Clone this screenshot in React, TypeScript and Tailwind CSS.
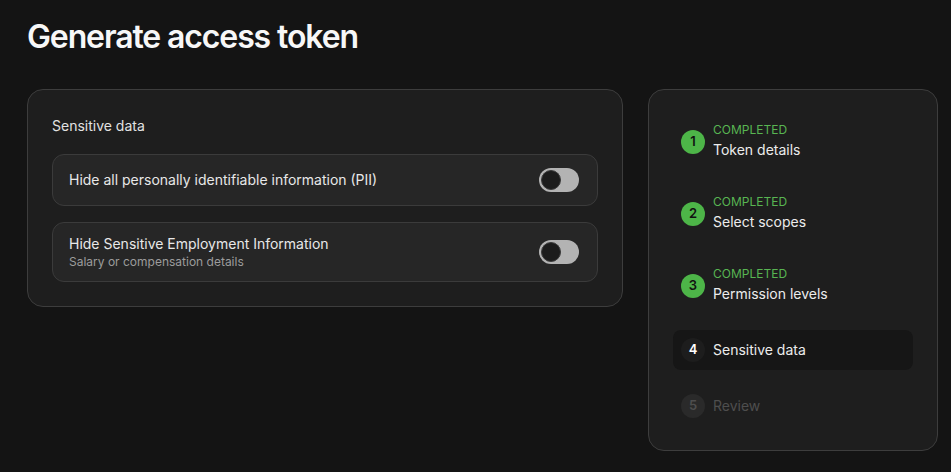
import { useState } from 'react';

type StepState = 'done' | 'current' | 'todo';

const steps: { n: number; title: string; state: StepState }[] = [
  { n: 1, title: 'Token details', state: 'done' },
  { n: 2, title: 'Select scopes', state: 'done' },
  { n: 3, title: 'Permission levels', state: 'done' },
  { n: 4, title: 'Sensitive data', state: 'current' },
  { n: 5, title: 'Review', state: 'todo' },
];

function Toggle({ on, onChange }: { on: boolean; onChange: (v: boolean) => void }) {
  return (
    <button
      type="button"
      role="switch"
      aria-checked={on}
      onClick={() => onChange(!on)}
      className="relative flex h-6 w-10 shrink-0 items-center rounded-full bg-[#b3b3b3] p-[2px]"
    >
      <span
        className={
          'block h-5 w-5 rounded-full border border-[#3a3a3a] bg-[#1c1c1c] transition-transform ' +
          (on ? 'translate-x-4' : 'translate-x-0')
        }
      />
    </button>
  );
}

function SettingRow({ title, hint }: { title: string; hint?: string }) {
  const [on, setOn] = useState(false);
  return (
    <div
      className={
        'flex items-center justify-between rounded-xl border border-[#3b3b3b] bg-[#262626] pl-4 pr-[18px] ' +
        (hint ? 'h-[60px]' : 'h-[52px]')
      }
    >
      <div className="flex flex-col">
        <span className="text-sm leading-5 text-[#e8e8e8]">{title}</span>
        {hint && <span className="text-xs leading-4 text-[#9c9c9c]">{hint}</span>}
      </div>
      <Toggle on={on} onChange={setOn} />
    </div>
  );
}

function Step({ n, title, state }: { n: number; title: string; state: StepState }) {
  if (state === 'done') {
    return (
      <div className="flex items-center gap-2 p-2">
        <span className="grid h-6 w-6 place-items-center rounded-full bg-[#4db548] text-[13px] font-semibold text-[#111]">
          {n}
        </span>
        <div className="flex flex-col">
          <span className="text-xs leading-4 text-[#58b552]">COMPLETED</span>
          <span className="text-sm leading-6 text-[#ececec]">{title}</span>
        </div>
      </div>
    );
  }
  if (state === 'current') {
    return (
      <div className="flex h-10 items-center gap-2 rounded-lg bg-[#161616] px-2">
        <span className="grid h-6 w-6 place-items-center rounded-full bg-[#1d1d1d] text-[13px] font-semibold text-white">
          {n}
        </span>
        <span className="text-sm text-[#ececec]">{title}</span>
      </div>
    );
  }
  return (
    <div className="flex h-10 items-center gap-2 px-2">
      <span className="grid h-6 w-6 place-items-center rounded-full bg-[#2a2a2a] text-[13px] font-semibold text-[#4e4e4e]">
        {n}
      </span>
      <span className="text-sm text-[#4e4e4e]">{title}</span>
    </div>
  );
}

export default function App() {
  return (
    <div
      className="min-h-screen overflow-hidden bg-[#141414] pl-[27px] pt-[17px]"
      style={{ fontFamily: 'Inter, "Noto Sans", sans-serif' }}
    >
      <h1 className="text-[32px] font-semibold leading-10 tracking-[-0.035em] text-[#f7f7f7]">
        Generate access token
      </h1>

      <div className="mt-8 flex items-start gap-[25px]">
        <section className="w-[596px] shrink-0 rounded-2xl border border-[#3d3d3d] bg-[#1e1e1e] p-6">
          <h2 className="text-sm leading-6 text-[#e2e2e2]">Sensitive data</h2>
          <div className="mt-4 flex flex-col gap-4">
            <SettingRow title="Hide all personally identifiable information (PII)" />
            <SettingRow title="Hide Sensitive Employment Information" hint="Salary or compensation details" />
          </div>
        </section>

        <aside className="w-[290px] shrink-0 rounded-2xl border border-[#3d3d3d] bg-[#1e1e1e] p-6">
          <div className="flex flex-col gap-4">
            {steps.map((s) => (
              <Step key={s.n} {...s} />
            ))}
          </div>
        </aside>
      </div>
    </div>
  );
}
